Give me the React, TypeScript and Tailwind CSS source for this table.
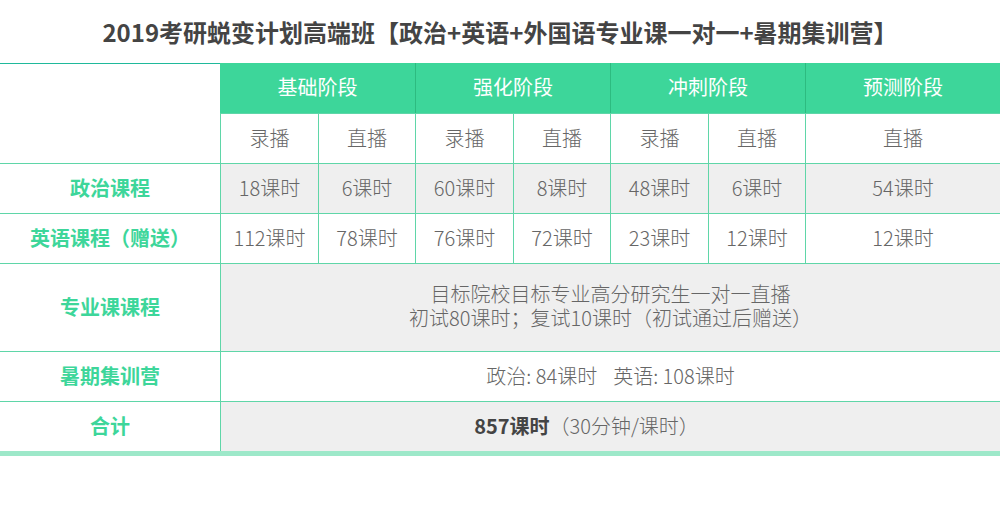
const font = { fontFamily: '"Noto Sans CJK SC", "Noto Sans", sans-serif' };

const phases = ["基础阶段", "强化阶段", "冲刺阶段", "预测阶段"];
const modes = ["录播", "直播", "录播", "直播", "录播", "直播", "直播"];
const politics = ["18课时", "6课时", "60课时", "8课时", "48课时", "6课时", "54课时"];
const english = ["112课时", "78课时", "76课时", "72课时", "23课时", "12课时", "12课时"];

function Label({ children }: { children: React.ReactNode }) {
	return (
		<div className="col-start-1 flex items-center justify-center border-t border-[#5fd6a8] bg-white pb-0.5 text-[20px] font-bold text-[#3dd69a]">
			{children}
		</div>
	);
}

function Cell({ children, gray }: { children: React.ReactNode; gray?: boolean }) {
	return (
		<div
			className={`flex items-center justify-center border-t border-l border-[#5fd6a8] pb-0.5 text-[20px] font-light text-[#666] ${
				gray ? "bg-[#efefef]" : "bg-white"
			}`}
		>
			{children}
		</div>
	);
}

export default function App() {
	return (
		<div className="h-[507px] w-[1000px] bg-white" style={font}>
			{/* Title */}
			<div className="flex h-[63px] items-center justify-center text-[24px] font-bold text-[#444]">
				2019考研蜕变计划高端班【政治+英语+外国语专业课一对一+暑期集训营】
			</div>

			{/* Table */}
			<div className="grid grid-cols-[220px_98px_97px_98px_97px_98px_97px_195px] grid-rows-[50px_50px_50px_50px_88px_50px_50px]">
				<div className="row-span-2 border-t border-[#1fb99b] bg-white" />
				{phases.map((p, i) => (
					<div
						key={p}
						className={`flex items-center justify-center bg-[#3dd69a] pb-0.5 text-[20px] text-white ${
							i === 3 ? "" : "col-span-2"
						} ${i === 0 ? "" : "border-l border-[#2dbb80]"}`}
					>
						{p}
					</div>
				))}
				{modes.map((m, i) => (
					<Cell key={i}>{m}</Cell>
				))}

				<Label>政治课程</Label>
				{politics.map((v, i) => (
					<Cell key={i} gray>
						{v}
					</Cell>
				))}

				<Label>英语课程（赠送）</Label>
				{english.map((v, i) => (
					<Cell key={i}>{v}</Cell>
				))}

				<Label>专业课课程</Label>
				<div className="col-span-7 flex flex-col items-center justify-center border-t border-l border-[#5fd6a8] bg-[#efefef] pb-1 text-[20px] leading-[24px] font-light text-[#666]">
					<span>目标院校目标专业高分研究生一对一直播</span>
					<span>初试80课时；复试10课时（初试通过后赠送）</span>
				</div>

				<Label>暑期集训营</Label>
				<div className="col-span-7 flex items-center justify-center border-t border-l border-[#5fd6a8] bg-white pb-0.5 text-[20px] font-light text-[#666]">
					<span>政治: 84课时</span>
					<span className="ml-4">英语: 108课时</span>
				</div>

				<Label>合计</Label>
				<div className="col-span-7 flex items-center justify-center border-t border-l border-[#5fd6a8] bg-[#efefef] pr-12 pb-0.5 text-[20px] text-[#666]">
					<span className="font-bold text-[#444]">857课时</span>
					<span className="font-light">（30分钟/课时）</span>
				</div>
			</div>
			<div className="h-[5px] bg-[#9de8c9]" />
		</div>
	);
}
